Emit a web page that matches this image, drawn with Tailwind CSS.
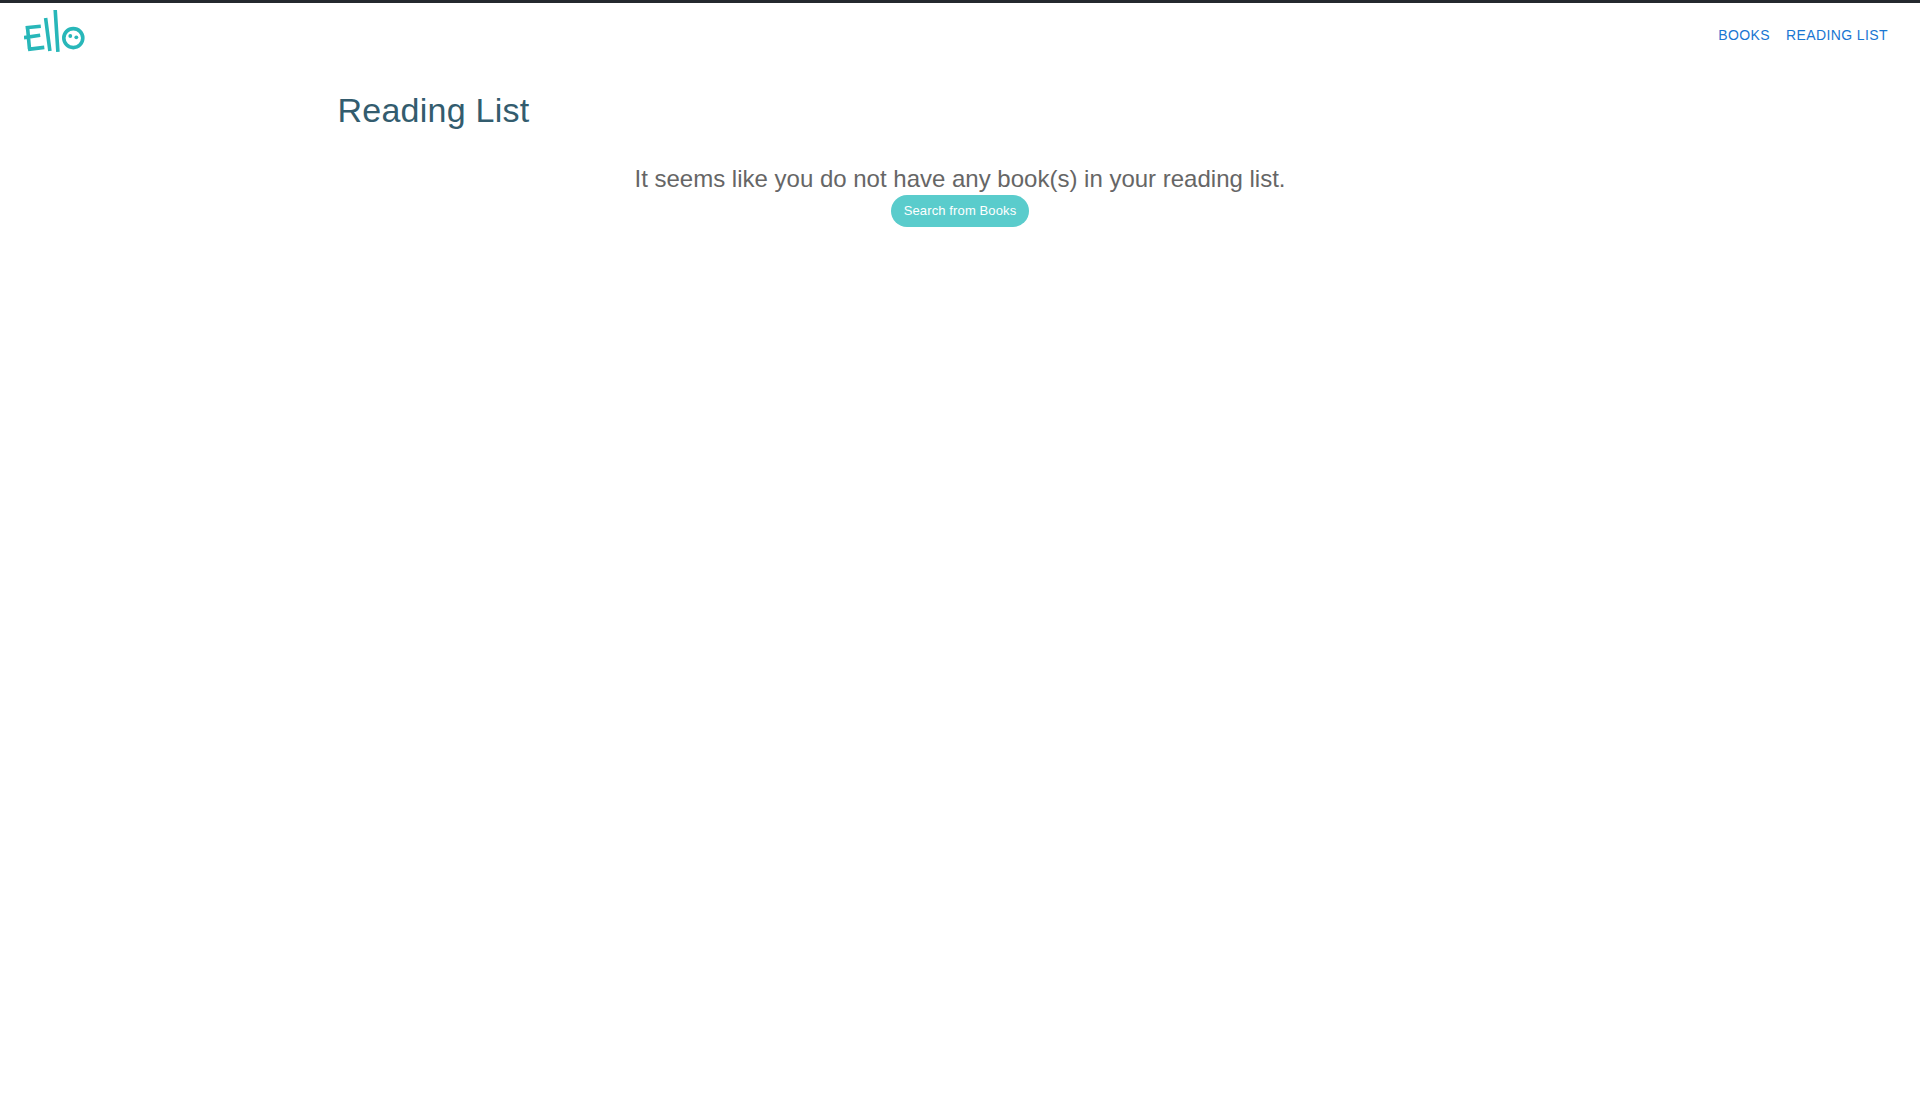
<!DOCTYPE html>
<html lang="en">
<head>
<meta charset="utf-8">
<title>Reading List</title>
<script src="https://cdn.jsdelivr.net/npm/@tailwindcss/browser@4"></script>
</head>
<body class="min-h-screen border-t-3 border-[#24292e] bg-white font-['Liberation_Sans',sans-serif]">
<header class="flex h-16 items-center justify-between px-6">
  <a href="#" aria-label="Ello" class="-mt-2">
    <svg class="block h-[42px] w-[61px]" viewBox="24 10 61 42" fill="none" stroke="#28b7b9" stroke-width="3.6">
      <path d="M40.8 26.2 25.6 27.7M27.4 26 29.5 49.2M24 37.6 40.2 35.2M28 49.4 44.3 47.4M45.6 18 49.9 51M55.2 10 57.9 51.8"/>
      <circle cx="73.3" cy="38.1" r="9.5"/>
      <g fill="#28b7b9" stroke="none"><circle cx="70.3" cy="36" r="1.9"/><circle cx="76.3" cy="37.3" r="1.9"/></g>
    </svg>
  </a>
  <nav class="flex text-sm leading-[24.5px] tracking-[0.02857em] text-[#1976d2]">
    <a href="#" class="px-2 py-1.5">BOOKS</a>
    <a href="#" class="px-2 py-1.5">READING LIST</a>
  </nav>
</header>
<main class="mx-auto w-[1245px] pt-[22px]">
  <h1 class="text-[34px] leading-[42px] tracking-[0.00735em] text-[#335c6e]">Reading List</h1>
  <section class="mt-8 flex flex-col items-center">
    <p class="text-2xl leading-8 text-[#666666]">It seems like you do not have any book(s) in your reading list.</p>
    <button class="h-8 rounded-full bg-[#5acccc] px-[12.5px] text-[13px] tracking-[0.00938em] text-white">Search from Books</button>
  </section>
</main>
</body>
</html>
